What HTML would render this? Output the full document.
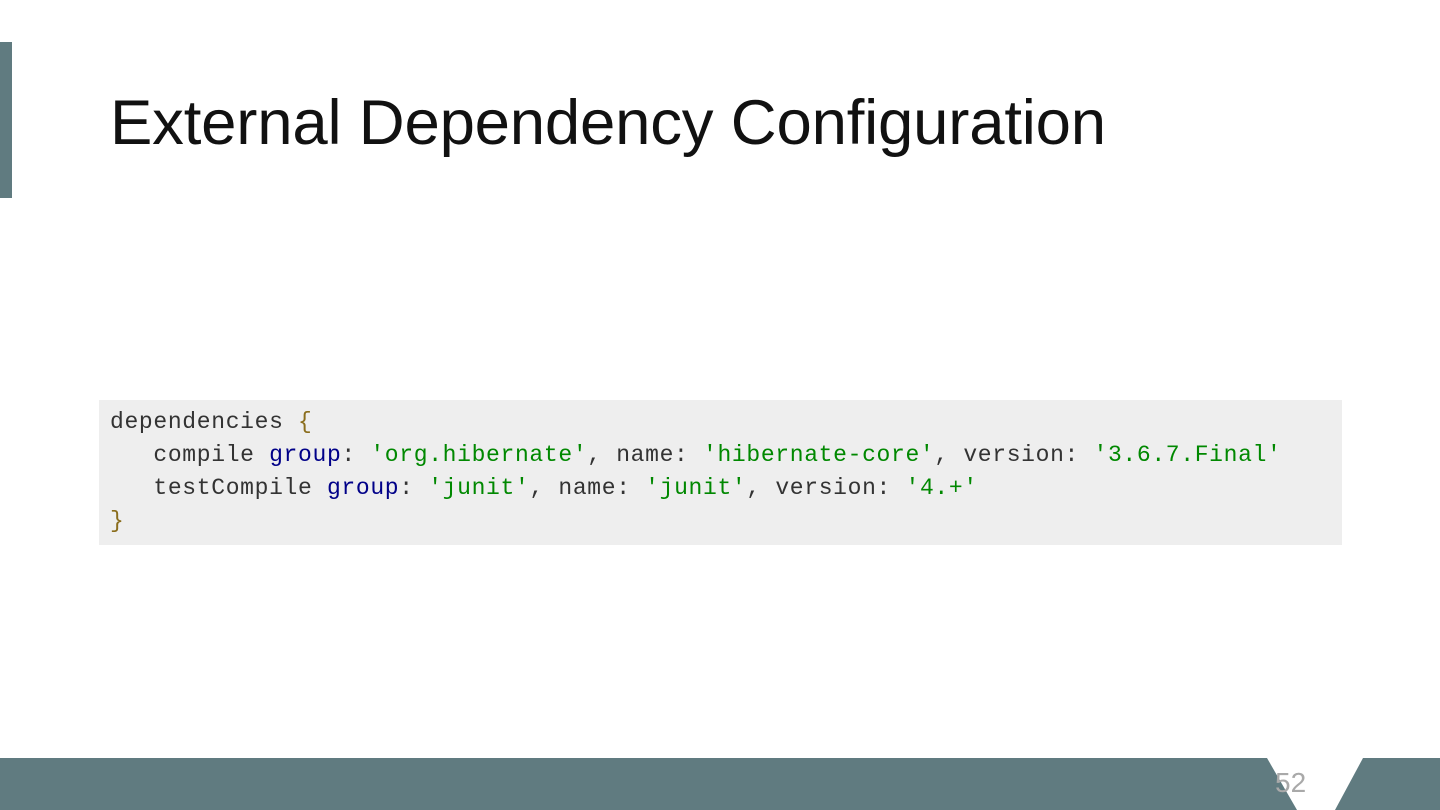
<!DOCTYPE html>
<html><head><meta charset="utf-8"><style>
html,body{margin:0;padding:0}
body{width:1440px;height:810px;position:relative;background:#fff;overflow:hidden;font-family:"Liberation Sans",sans-serif}
.lb{position:absolute;left:0;top:42px;width:12px;height:156px;background:#607b80}
h1{position:absolute;left:110px;top:86px;margin:0;font-weight:normal;font-size:63.5px;line-height:74px;color:#111;letter-spacing:-0.2px;white-space:nowrap}
.code{position:absolute;left:99px;top:400px;width:1243px;height:145px;background:#eeeeee}
pre{position:absolute;left:110px;top:406px;margin:0;font-family:"Liberation Mono",monospace;font-size:23px;letter-spacing:0.66px;line-height:33px;color:#333}
.b{color:#8a6d1c}.k{color:#000088}.s{color:#008800}
.num{position:absolute;left:1275px;top:767px;font-size:28px;color:#a9a9a9}
</style></head><body>
<div class="lb"></div>
<h1>External Dependency Configuration</h1>
<div class="code"></div>
<pre>dependencies <span class="b">{</span>
   compile <span class="k">group</span>: <span class="s">'org.hibernate'</span>, name: <span class="s">'hibernate-core'</span>, version: <span class="s">'3.6.7.Final'</span>
   testCompile <span class="k">group</span>: <span class="s">'junit'</span>, name: <span class="s">'junit'</span>, version: <span class="s">'4.+'</span>
<span class="b">}</span></pre>
<svg style="position:absolute;left:0;top:758px" width="1440" height="52">
<polygon points="0,0 1267,0 1297,52 0,52" fill="#607b80"/>
<polygon points="1363,0 1440,0 1440,52 1335,52" fill="#607b80"/>
</svg>
<div class="num">52</div>
</body></html>
